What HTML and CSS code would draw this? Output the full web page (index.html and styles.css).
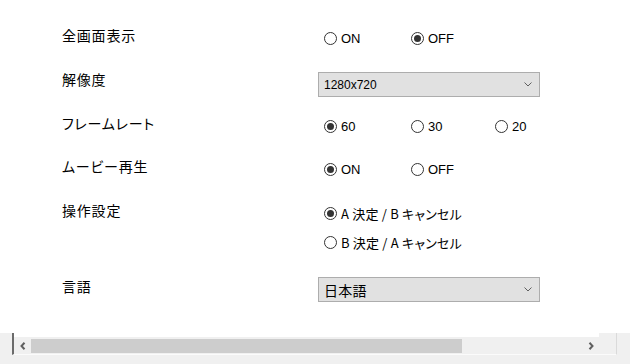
FILE: index.html
```html
<!DOCTYPE html>
<html lang="ja">
<head>
    <meta charset="UTF-8">
    <meta name="viewport" content="width=device-width, initial-scale=1.0">
    <title>設定</title>
    <link rel="stylesheet" href="styles.css">
</head>
<body>
    <div class="panel">
        <div class="settings">
            <div class="row">
                <div class="label">全画面表示</div>
                <div class="radios">
                    <div class="radio"><span class="dot"></span>ON</div>
                    <div class="radio on"><span class="dot"></span>OFF</div>
                </div>
            </div>
            <div class="row row-select">
                <div class="label label-up">解像度</div>
                <div class="select">
                    <span>1280x720</span>
                    <svg class="chevron" viewBox="0 0 8 5" width="8" height="5"><path d="M0.5 0.5 L4 4 L7.5 0.5" fill="none" stroke="#606060" stroke-width="1"/></svg>
                </div>
            </div>
            <div class="row">
                <div class="label">フレームレート</div>
                <div class="radios">
                    <div class="radio on"><span class="dot"></span>60</div>
                    <div class="radio"><span class="dot"></span>30</div>
                    <div class="radio"><span class="dot"></span>20</div>
                </div>
            </div>
            <div class="row">
                <div class="label">ムービー再生</div>
                <div class="radios">
                    <div class="radio on"><span class="dot"></span>ON</div>
                    <div class="radio"><span class="dot"></span>OFF</div>
                </div>
            </div>
            <div class="row row-stack">
                <div class="label">操作設定</div>
                <div class="radios stack">
                    <div class="radio on"><span class="dot"></span><span class="jp">A 決定 / B キャンセル</span></div>
                    <div class="radio"><span class="dot"></span><span class="jp">B 決定 / A キャンセル</span></div>
                </div>
            </div>
            <div class="row row-select">
                <div class="label">言語</div>
                <div class="select">
                    <span class="jp">日本語</span>
                    <svg class="chevron" viewBox="0 0 8 5" width="8" height="5"><path d="M0.5 0.5 L4 4 L7.5 0.5" fill="none" stroke="#606060" stroke-width="1"/></svg>
                </div>
            </div>
        </div>
    </div>

    <div class="hscroll">
        <div class="hscroll-bar">
            <div class="track">
                <div class="arrow">
                    <svg viewBox="0 0 6 8" width="6" height="8"><path d="M4.5 0.8 L1.5 4 L4.5 7.2" fill="none" stroke="#606060" stroke-width="2"/></svg>
                </div>
                <div class="thumb"></div>
                <div class="spacer"></div>
                <div class="arrow">
                    <svg viewBox="0 0 6 8" width="6" height="8"><path d="M1.5 0.8 L4.5 4 L1.5 7.2" fill="none" stroke="#606060" stroke-width="2"/></svg>
                </div>
            </div>
            <div class="corner"></div>
        </div>
    </div>
</body>
</html>
```

FILE: styles.css
```css
body {
    margin: 0;
    background: #ffffff;
    color: #000000;
    font-family: "Liberation Sans", "Noto Sans CJK JP", sans-serif;
    font-size: 13px;
}
.panel {
    height: 333px;
}
.settings {
    padding: 26px 0 0 62px;
}
.row {
    display: flex;
    margin-top: 19px;
}
.row:first-child {
    margin-top: 0;
}
.row-select {
    margin-top: 22px;
}
.row-select + .row {
    margin-top: 17px;
}
.row-stack {
    margin-top: 20px;
}
.row-stack + .row-select {
    margin-top: 23px;
}
.label {
    width: 256px;
    line-height: 18px;
    font-family: "Noto Sans CJK JP", sans-serif;
    font-size: 14px;
    letter-spacing: 0.8px;
    font-feature-settings: "palt";
}
.row-select .label {
    line-height: 19px;
}
.row-select .label-up {
    line-height: 14px;
}
.radios {
    display: grid;
    grid-template-columns: 87px 84px auto;
    padding-left: 6px;
}
.radios.stack {
    grid-template-columns: auto;
    row-gap: 5px;
}
.radio {
    display: flex;
    align-items: center;
    height: 24px;
}
.dot {
    width: 11px;
    height: 11px;
    border: 1px solid #333333;
    border-radius: 50%;
    background: #ffffff;
    margin-right: 4px;
    display: flex;
    align-items: center;
    justify-content: center;
}
.radio.on .dot::after {
    content: '';
    width: 7px;
    height: 7px;
    border-radius: 50%;
    background: #333333;
}
.jp {
    font-family: "Noto Sans CJK JP", sans-serif;
    font-size: 13px;
    font-feature-settings: "palt";
    letter-spacing: 0.2px;
}
.select {
    box-sizing: border-box;
    width: 222px;
    height: 25px;
    border: 1px solid #adadad;
    background: #e1e1e1;
    padding: 0 7px 0 5px;
    display: flex;
    align-items: center;
    justify-content: space-between;
    font-size: 12px;
}
.select .jp {
    font-size: 14px;
}

/* horizontal scrollbar at the bottom */
.hscroll {
    height: 31px;
    background: #f0f0f0;
}
.hscroll-bar {
    display: flex;
    width: 605px;
    height: 22px;
    margin-left: 12px;
    border-left: 2px solid #6b6b6b;
    border-right: 1px solid #dadada;
    border-bottom: 1px solid #fbfbfb;
    box-sizing: border-box;
}
.track {
    flex: 1;
    display: flex;
    align-items: center;
    margin-top: 4px;
    height: 17px;
    background: #f0f0f0;
    box-shadow: 0 -4px 0 #ffffff;
}
.arrow {
    width: 17px;
    display: flex;
    align-items: center;
    justify-content: center;
}
.thumb {
    width: 431px;
    height: 14px;
    background: #cdcdcd;
}
.spacer {
    flex: 1;
}
.corner {
    width: 17px;
}
```
